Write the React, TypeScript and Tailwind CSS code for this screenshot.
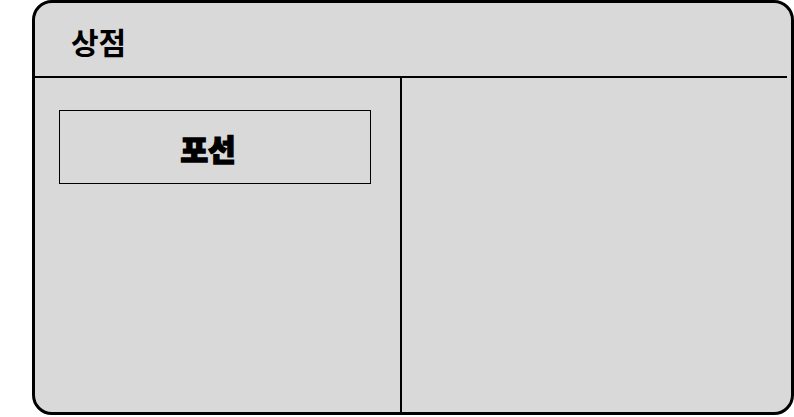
import React from 'react';

const FONT = '"Noto Sans CJK KR", "Noto Sans", sans-serif';

export default function App() {
  return (
    <div className="w-[794px] h-[417px] bg-white" style={{ fontFamily: FONT }}>
      <div className="ml-[32px] w-[762px] h-[415px] border-[3px] border-black rounded-[20px] bg-[#d9d9d9] flex flex-col overflow-hidden">
        {/* Header */}
        <div className="h-[75px] shrink-0 mr-[4px] border-b-2 border-black flex items-center pl-[36px] pt-[2px]">
          <h1 className="text-[30px] font-bold text-black leading-none">상점</h1>
        </div>

        {/* Body */}
        <div className="flex flex-1 min-h-0">
          <div className="w-[365px] shrink-0 pt-[32px] pl-[24px]">
            <div className="w-[312px] h-[74px] border border-black flex items-center justify-center pr-[14px] pt-[2px]">
              <span className="text-[30px] font-black text-black leading-none [-webkit-text-stroke:1.5px_black]">포선</span>
            </div>
          </div>
          <div className="flex-1 border-l-2 border-black" />
        </div>
      </div>
    </div>
  );
}
